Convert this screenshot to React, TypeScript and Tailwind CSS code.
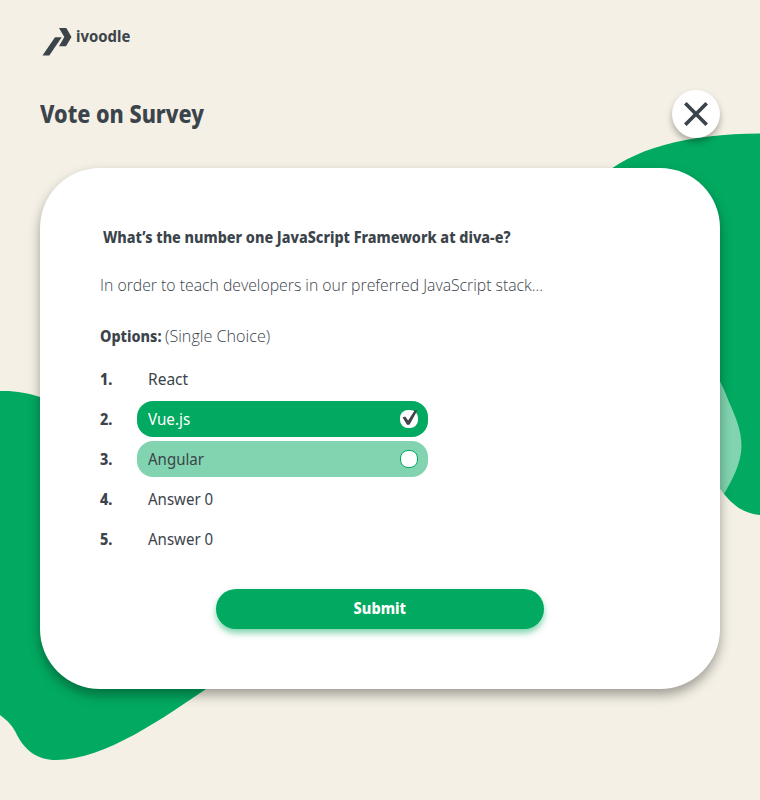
import React from "react";

const options = [
  { label: "React", state: "plain", width: "scale-x-[0.97]" },
  { label: "Vue.js", state: "selected", width: "scale-x-[0.95]" },
  { label: "Angular", state: "hover", width: "scale-x-[0.94]" },
  { label: "Answer 0", state: "plain", width: "scale-x-[0.94]" },
  { label: "Answer 0", state: "plain", width: "scale-x-[0.94]" },
];

const pill: Record<string, string> = {
  plain: "text-[#3b444b]",
  selected: "bg-[#02a960] text-white",
  hover: "bg-[#81d4af] text-[#3b444b]",
};

function Background() {
  return (
    <svg className="absolute inset-0" width="760" height="800" viewBox="0 0 760 800">
      <path d="M598 180C631 148 688 134 760 133.500V515C744 514 730 504 720 488L600 400Z" fill="#02a960" />
      <path d="M700 350C714 367 724 388 729 402C736 418 741.500 430 741.500 447C741 464 732 480 724 494L720 488L690 450Z" fill="#81d4af" />
      <path d="M0 391C15 390.500 28 393 40 397L240 500V665C225 675 215 683 206 689C166 716 105 760 56 760C37 760 25 750 17 735C13 726 8 721 0 715Z" fill="#02a960" />
    </svg>
  );
}

function Checkbox({ checked }: { checked: boolean }) {
  return (
    <span className={`relative h-[18px] w-[18px] rounded-lg bg-white ${checked ? "" : "border border-[#02a960]"}`}>
      {checked && (
        <svg className="absolute left-0 top-0 overflow-visible" width="18" height="18" viewBox="0 0 18 18">
          <path d="M2.600 7.600L5.200 6.600L8.100 10.600L14.800 0.300L17.300 0.600L9.500 14.800H7Z" fill="#414448" />
        </svg>
      )}
    </span>
  );
}

export default function App() {
  return (
    <div className="relative h-[800px] w-[760px] overflow-hidden bg-[#f4f0e5] font-['Noto_Sans',sans-serif] text-[#3b444b]">
      <Background />
      <div className="relative flex h-full flex-col px-10">
        <header className="flex h-[90px] items-start pt-[26px]">
          <svg className="ml-[2px]" width="32" height="32" viewBox="0 0 32 32" fill="#3b444b">
            <path d="M17 2H24.300L29.500 11L24 20.300H17L22.300 11Z" />
            <path d="M13 11.200H19.700L7.300 29.500H0.500Z" />
          </svg>
          <span className="ml-[2px] origin-left scale-x-[0.93] text-base leading-5 font-bold">ivoodle</span>
        </header>
        <div className="flex h-[78px] items-start justify-between">
          <h1 className="origin-left scale-x-[0.9] pt-2 text-2xl leading-8 font-extrabold whitespace-nowrap">Vote on Survey</h1>
          <button aria-label="Close" className="flex h-12 w-12 items-center justify-center rounded-full bg-white shadow-[0_4px_6px_rgba(0,0,0,0.3)]">
            <svg width="24" height="24" viewBox="0 0 24 24" stroke="#3b444b" strokeWidth="3.700">
              <path d="M1.300 1.300L22.700 22.700M22.700 1.300L1.300 22.700" />
            </svg>
          </button>
        </div>
        <main className="flex h-[521px] flex-col rounded-[60px] bg-white px-[60px] pt-[57px] shadow-[0_6px_12px_rgba(0,0,0,0.35)]">
          <h2 className="ml-[3px] h-6 w-max origin-left scale-x-[0.898] text-base leading-6 font-extrabold whitespace-nowrap">What’s the number one JavaScript Framework at diva-e?</h2>
          <p className="mt-6 h-6 w-max origin-left scale-x-[0.986] font-['Open_Sans',sans-serif] text-base leading-6 font-light whitespace-nowrap">In order to teach developers in our preferred JavaScript stack...</p>
          <div className="mt-[27px] flex h-6 leading-6 whitespace-nowrap">
            <span className="w-[65px] origin-left scale-x-[0.9] font-extrabold">Options:</span>
            <span className="origin-left scale-x-[1.01] font-['Open_Sans',sans-serif] font-light">(Single Choice)</span>
          </div>
          <ol className="mt-[13px] flex flex-col gap-1">
            {options.map((o, i) => (
              <li key={i} className="flex h-9 items-center">
                <span className="w-[37px] origin-left scale-x-[0.9] text-base font-extrabold">{i + 1}.</span>
                <div className={`flex h-9 w-[291px] items-center justify-between rounded-2xl pr-[10px] pl-[11px] ${pill[o.state]}`}>
                  <span className={`origin-left text-base whitespace-nowrap ${o.width}`}>{o.label}</span>
                  {o.state !== "plain" && <Checkbox checked={o.state === "selected"} />}
                </div>
              </li>
            ))}
          </ol>
          <button className="mt-8 flex h-10 w-[328px] items-center justify-center self-center rounded-full bg-[#02a960] pb-0.5 font-extrabold text-white shadow-[0_4px_6px_rgba(2,169,96,0.5)]">
            <span className="scale-x-[0.91]">Submit</span>
          </button>
        </main>
      </div>
    </div>
  );
}
